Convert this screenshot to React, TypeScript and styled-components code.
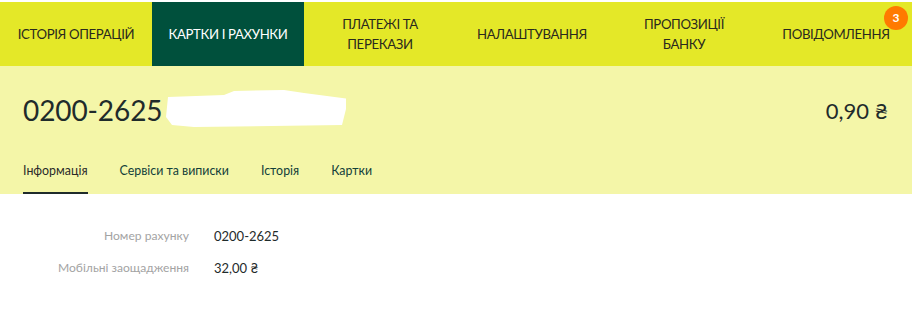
import React from "react";
import styled, { createGlobalStyle } from "styled-components";

const Global = createGlobalStyle`
  html, body { margin: 0; padding: 0; background: #ffffff; }
  body { font-family: "Lato", "Noto Sans", sans-serif; color: #1f2b2b; }
`;

const Page = styled.div`
  width: 912px;
  padding-top: 2px;
`;

const Nav = styled.nav`
  display: grid;
  grid-template-columns: repeat(6, 152px);
  height: 64px;
  background: #e4e828;
`;

const NavItem = styled.div<{ $active?: boolean }>`
  position: relative;
  display: flex;
  align-items: center;
  justify-content: center;
  text-align: center;
  font-size: 13.2px;
  line-height: 20px;
  text-transform: uppercase;
  letter-spacing: -0.35px;
  color: ${(p) => (p.$active ? "#ffffff" : "#2a2a1e")};
  background: ${(p) => (p.$active ? "#00503c" : "transparent")};
  padding: 0 10px;
`;

const Badge = styled.span`
  position: absolute;
  top: 4px;
  right: 4px;
  width: 24px;
  height: 24px;
  border-radius: 50%;
  background: #ff7a00;
  color: #ffffff;
  font-size: 12px;
  font-weight: 700;
  letter-spacing: 0;
  display: flex;
  align-items: center;
  justify-content: center;
`;

const Panel = styled.section`
  background: #f4f6a8;
  padding: 0 24px 0 23px;
`;

const Header = styled.div`
  display: flex;
  align-items: center;
  justify-content: space-between;
  height: 88px;
`;

const TitleGroup = styled.div`
  display: flex;
  align-items: center;
`;

const Title = styled.h1`
  margin: 0;
  font-size: 28px;
  font-weight: 400;
  letter-spacing: -0.1px;
  color: #1f2b2b;
`;

const Redaction = styled.svg`
  display: block;
  margin-left: 2px;
  margin-top: -2px;
`;

const Balance = styled.div`
  font-size: 22px;
  color: #1f2b2b;
`;

const Tabs = styled.div`
  display: flex;
  gap: 32px;
  height: 40px;
`;

const Tab = styled.div<{ $active?: boolean }>`
  font-size: 12.4px;
  color: ${(p) => (p.$active ? "#2a2a2a" : "#12403a")};
  padding-top: 9px;
  box-sizing: border-box;
  border-bottom: 2px solid ${(p) => (p.$active ? "#1f2b2b" : "transparent")};
`;

const Info = styled.div`
  display: grid;
  grid-template-columns: 189px auto;
  column-gap: 25px;
  row-gap: 14px;
  padding-top: 33px;
  font-size: 13px;
  line-height: 18px;
`;

const Label = styled.div`
  text-align: right;
  font-size: 12.1px;
  color: #a3a3a3;
`;

const Value = styled.div`
  color: #1f2b2b;
`;

export default function App() {
  return (
    <Page>
      <Global />
      <Nav>
        <NavItem>Історія операцій</NavItem>
        <NavItem $active>Картки і рахунки</NavItem>
        <NavItem>Платежі та<br />перекази</NavItem>
        <NavItem>Налаштування</NavItem>
        <NavItem>Пропозиції<br />банку</NavItem>
        <NavItem>
          Повідомлення
          <Badge>3</Badge>
        </NavItem>
      </Nav>
      <Panel>
        <Header>
          <TitleGroup>
            <Title>0200-2625</Title>
            <Redaction width="182" height="40" viewBox="0 0 182 40">
              <path
                d="M4 8 L60 6 L70 2 L120 1 L140 4 L185 10 L182 20 L178 36 L30 38 L8 36 L2 28 Z"
                fill="#ffffff"
              />
            </Redaction>
          </TitleGroup>
          <Balance>0,90 ₴</Balance>
        </Header>
        <Tabs>
          <Tab $active>Інформація</Tab>
          <Tab>Сервіси та виписки</Tab>
          <Tab>Історія</Tab>
          <Tab>Картки</Tab>
        </Tabs>
      </Panel>
      <Info>
        <Label>Номер рахунку</Label>
        <Value>0200-2625</Value>
        <Label>Мобільні заощадження</Label>
        <Value>32,00 ₴</Value>
      </Info>
    </Page>
  );
}
